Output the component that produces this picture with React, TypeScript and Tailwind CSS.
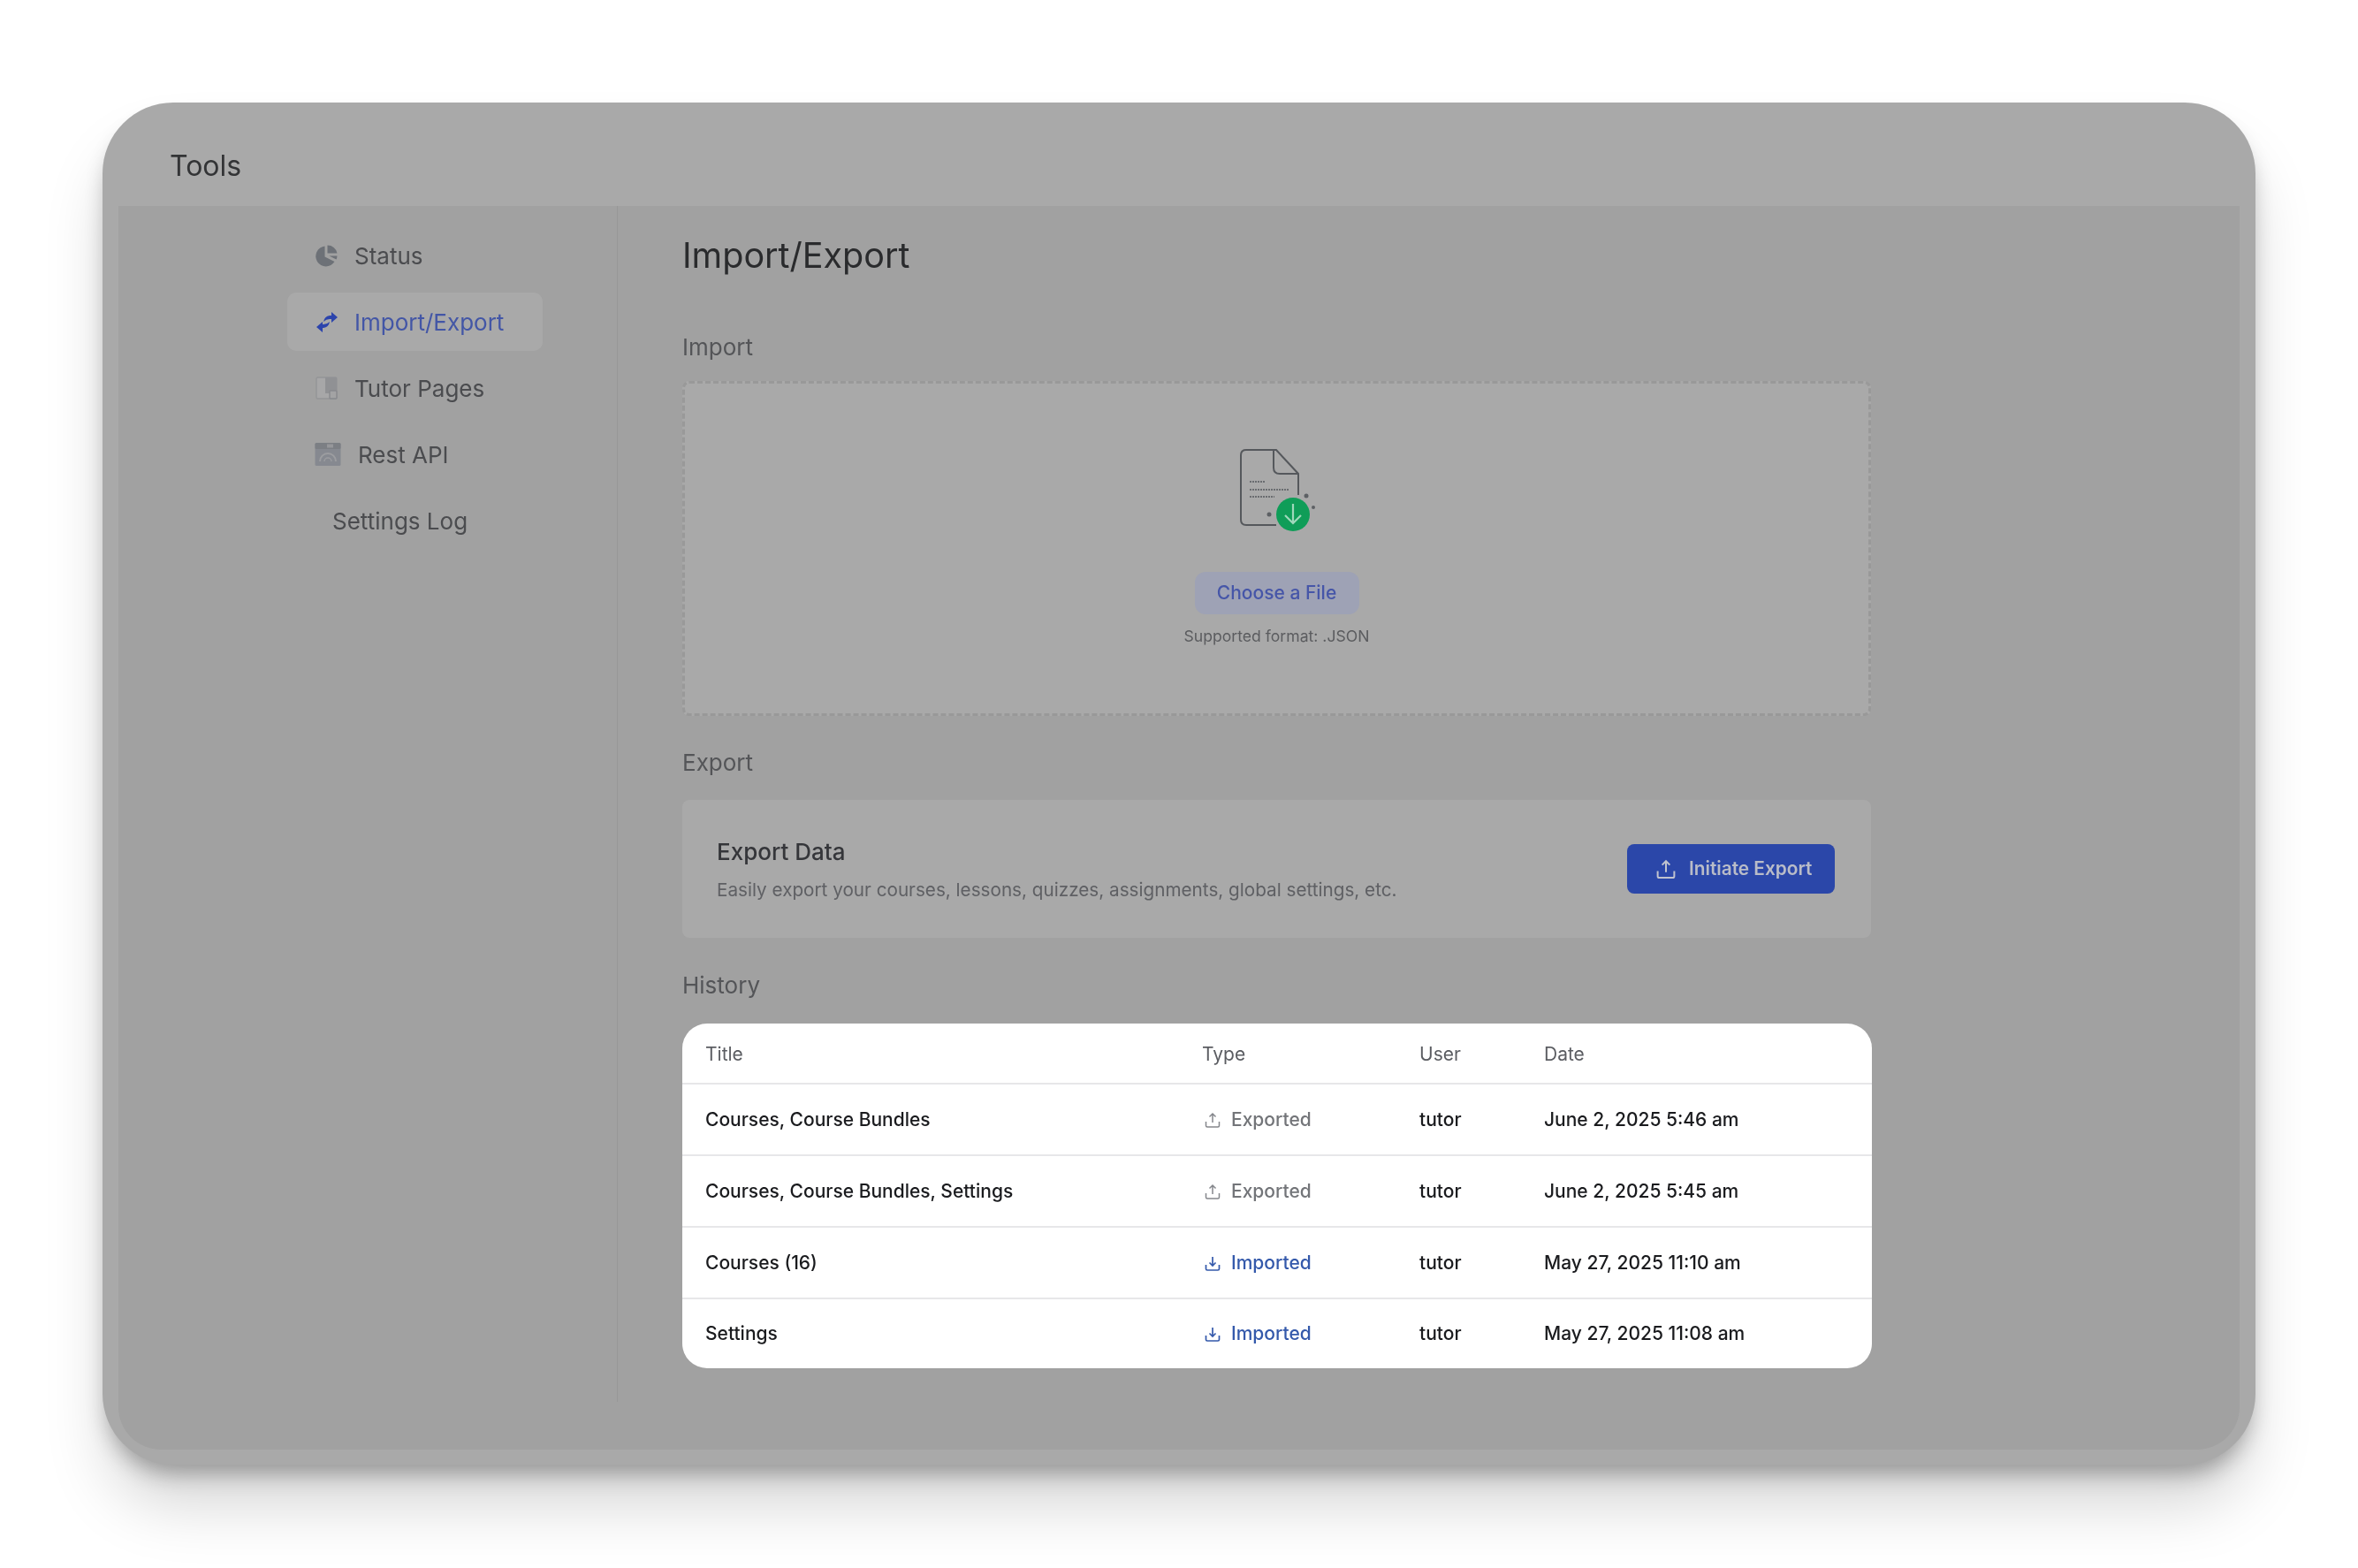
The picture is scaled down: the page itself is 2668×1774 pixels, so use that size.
import React from "react";

const font = { fontFamily: "Inter, 'Liberation Sans', sans-serif" };

function StatusIcon() {
  return (
    <svg viewBox="0 0 27 27" className="w-[27px] h-[27px] shrink-0">
      <path d="M11.500 2.500A11.500 11.500 0 1 0 22.500 20L11.500 14.500Z" fill="#6d7177" />
      <path d="M14.500 1.500A11 11 0 0 1 25.500 10.500L14.500 10.500Z" fill="#6d7177" />
      <path d="M16.500 13.500H25.500A11 11 0 0 1 24.500 17.500Z" fill="#6d7177" />
    </svg>
  );
}

function SwapIcon() {
  return (
    <svg viewBox="0 0 27 27" className="w-[27px] h-[27px] shrink-0">
      <path d="M10 13Q11 7 17 6H19V2L26 8L19 14V10H17Q13 10 10 13Z" fill="#2c44ac" />
      <path d="M17 13Q16 19 10 20H9V25L2 19L9 13V16H10Q14 16 17 13Z" fill="#2c44ac" />
    </svg>
  );
}

function PagesIcon() {
  return (
    <svg viewBox="0 0 27 27" className="w-[27px] h-[27px] shrink-0">
      <rect x="2" y="1" width="23" height="24" rx="1.500" fill="#a7a7a8" stroke="#949597" strokeWidth="1.400" />
      <rect x="12" y="1" width="13" height="18" fill="#909194" />
      <rect x="17" y="16" width="8" height="9" rx="1" fill="#a3a3a4" stroke="#88898d" strokeWidth="1.400" />
    </svg>
  );
}

function ApiIcon() {
  return (
    <svg viewBox="0 0 30 26" className="w-[30px] h-[26px] shrink-0">
      <rect x="0.500" y="0" width="29" height="26" rx="1.500" fill="#868990" />
      <rect x="0.500" y="0" width="29" height="7" rx="1.500" fill="#7c7f84" />
      <rect x="14" y="1.500" width="7" height="4" fill="#96979a" />
      <path d="M6 21a9 9 0 0 1 18 0" fill="none" stroke="#9c9da0" strokeWidth="2" />
      <path d="M11 21a4 4 0 0 1 8 0" fill="none" stroke="#9c9da0" strokeWidth="1.500" />
    </svg>
  );
}

function DocIcon() {
  return (
    <svg viewBox="0 0 90 100" className="w-[90px] h-[100px]">
      <path d="M8 2H42L67 29V53M42 87H8Q2 87 2 81V8Q2 2 8 2" fill="none" stroke="#55585c" strokeWidth="2" />
      <path d="M39 2V22Q39 29 46 29H66" fill="none" stroke="#55585c" strokeWidth="2" />
      <path d="M12 38h18M12 47h44M12 55h28" stroke="#6a6c70" strokeWidth="2" strokeDasharray="2 1" />
      <circle cx="34" cy="75" r="2.500" fill="#5d6064" />
      <circle cx="76" cy="54" r="2.500" fill="#5d6064" />
      <circle cx="84" cy="67" r="2" fill="#5d6064" />
      <circle cx="61" cy="75" r="19" fill="#0f9d58" />
      <path d="M61 63V85M52 76L61 85L70 76" fill="none" stroke="#9fd8bb" strokeWidth="2.200" />
    </svg>
  );
}

function UpIcon({ color, size = 24, sw = 1.5 }: { color: string; size?: number; sw?: number }) {
  return (
    <svg viewBox="0 0 24 24" style={{ width: size, height: size }} className="shrink-0">
      <path d="M12 15V5M8.500 8.500 12 5l3.500 3.500" fill="none" stroke={color} strokeWidth={sw} />
      <path d="M4.500 14v4.500q0 1.500 1.500 1.500h12q1.500 0 1.500-1.500V14" fill="none" stroke={color} strokeWidth={sw} />
    </svg>
  );
}

function DownIcon({ color }: { color: string }) {
  return (
    <svg viewBox="0 0 24 24" className="w-6 h-6 shrink-0">
      <path d="M12 5V15M8.500 11.500 12 15l3.500-3.500" fill="none" stroke={color} strokeWidth="1.700" />
      <path d="M4.500 14v4.500q0 1.500 1.500 1.500h12q1.500 0 1.500-1.500V14" fill="none" stroke={color} strokeWidth="1.700" />
    </svg>
  );
}

const rows = [
  { title: "Courses, Course Bundles", type: "Exported", date: "June 2, 2025 5:46 am" },
  { title: "Courses, Course Bundles, Settings", type: "Exported", date: "June 2, 2025 5:45 am" },
  { title: "Courses (16)", type: "Imported", date: "May 27, 2025 11:10 am" },
  { title: "Settings", type: "Imported", date: "May 27, 2025 11:08 am" },
];

export default function App() {
  return (
    <div style={font} className="w-full h-[1774px] bg-white overflow-hidden pt-[116px] pl-[116px]">
      <div className="w-[2436px] h-[1541px] rounded-[80px] bg-[#a9a9a9] flex flex-col shadow-[0_50px_70px_-6px_rgba(0,0,0,0.17),0_16px_24px_-6px_rgba(0,0,0,0.3)]">
        <div className="h-[117px] shrink-0 pl-[76px] pt-[26px] flex items-center text-[32px] leading-[40px] text-[#333436]">
          <span className="blur-[0.7px]">Tools</span>
        </div>
        <div className="mx-[18px] h-[1407px] flex bg-[#a1a1a1] rounded-b-[48px] pb-[54px]">
          <aside className="w-[565px] shrink-0 border-r border-[#979797] pl-[191px] pt-[23px] text-[26px] leading-[32px] text-[#4b4c4f]">
            <nav className="w-[289px] flex flex-col gap-[9px] blur-[0.7px]">
              <div className="h-[66px] rounded-[10px] flex items-center pl-[31px] gap-[18px]">
                <StatusIcon />
                <span className="pt-[2px]">Status</span>
              </div>
              <div className="h-[66px] rounded-[10px] bg-[#a9a9a9] flex items-center pl-[31px] gap-[18px] text-[#4356a6]">
                <SwapIcon />
                <span className="pt-[2px]">Import/Export</span>
              </div>
              <div className="h-[66px] rounded-[10px] flex items-center pl-[31px] gap-[18px]">
                <PagesIcon />
                <span className="pt-[2px]">Tutor Pages</span>
              </div>
              <div className="h-[66px] rounded-[10px] flex items-center pl-[31px] gap-[19px]">
                <ApiIcon />
                <span className="pt-[2px]">Rest API</span>
              </div>
              <div className="h-[66px] rounded-[10px] flex items-center pl-[51px]">
                <span className="pt-[2px]">Settings Log</span>
              </div>
            </nav>
          </aside>
          <main className="w-[1346px] ml-[73px] pt-[32px]">
            <div className="w-[1345px] blur-[0.7px]">
              <h1 className="text-[39.5px] leading-[48px] font-normal text-[#2a2b2d]">Import/Export</h1>
              <div className="mt-[64px] text-[26px] leading-[32px] text-[#545558]">Import</div>
              <div className="mt-[22px] h-[379px] rounded-[8px] bg-[#a9a9a9] border-[3px] border-dashed border-[#999999] flex flex-col items-center pt-[73px]">
                <div className="pl-[4px]">
                  <DocIcon />
                </div>
                <button className="mt-[40px] w-[186px] h-[48px] rounded-[12px] bg-[#9ea2b5] text-[21px] font-medium text-[#4656a8] flex items-center justify-center">
                  Choose a File
                </button>
                <div className="mt-[12px] text-[17.6px] leading-[26px] text-[#5b5c5f]">Supported format: .JSON</div>
              </div>
              <div className="mt-[37px] text-[26px] leading-[32px] text-[#545558]">Export</div>
              <div className="mt-[26px] h-[156px] rounded-[8px] bg-[#a9a9a9] flex items-center justify-between pl-[39px] pr-[41px]">
                <div className="pt-[3px]">
                  <div className="text-[26px] leading-[34px] font-medium text-[#35363a]">Export Data</div>
                  <div className="mt-[11px] text-[20.7px] leading-[30px] text-[#5f6064]">
                    Easily export your courses, lessons, quizzes, assignments, global settings, etc.
                  </div>
                </div>
                <button className="w-[235px] h-[56px] rounded-[8px] bg-[#2b47a9] flex items-center pl-[29px] gap-[11px] text-[20.8px] font-semibold text-[#b9bcc8]">
                  <UpIcon color="#c0c3cf" size={30} sw={1.6} />
                  <span>Initiate Export</span>
                </button>
              </div>
              <div className="mt-[38px] text-[26px] leading-[32px] text-[#545558]">History</div>
            </div>
            <div className="mt-[27px] h-[390px] rounded-[28px] bg-white overflow-hidden">
              <div className="h-full flex flex-col blur-[0.35px]">
                <div className="h-[69px] pt-[2px] shrink-0 grid grid-cols-[588px_246px_141px_1fr] items-center border-b-2 border-[#e7e7e9] text-[21px] text-[#5b5d62]">
                  <div className="pl-[26px]">Title</div>
                  <div>Type</div>
                  <div>User</div>
                  <div>Date</div>
                </div>
                {rows.map((r, i) => (
                  <div
                    key={r.title}
                    className={
                      i === 3
                        ? "flex-1 grid grid-cols-[588px_246px_141px_1fr] items-center text-[21px] font-[450] text-[#1a1b1e]"
                        : "h-[81px] shrink-0 grid grid-cols-[588px_246px_141px_1fr] items-center border-b-2 border-[#e7e7e9] text-[21px] font-[450] text-[#1a1b1e]"
                    }
                  >
                    <div className="pl-[26px]">{r.title}</div>
                    <div
                      className={
                        r.type === "Imported"
                          ? "flex items-center gap-[9px] text-[#3459ab] font-medium"
                          : "flex items-center gap-[9px] text-[#737579]"
                      }
                    >
                      {r.type === "Imported" ? <DownIcon color="#3459ab" /> : <UpIcon color="#85878c" />}
                      <span>{r.type}</span>
                    </div>
                    <div>tutor</div>
                    <div>{r.date}</div>
                  </div>
                ))}
              </div>
            </div>
          </main>
        </div>
      </div>
    </div>
  );
}
